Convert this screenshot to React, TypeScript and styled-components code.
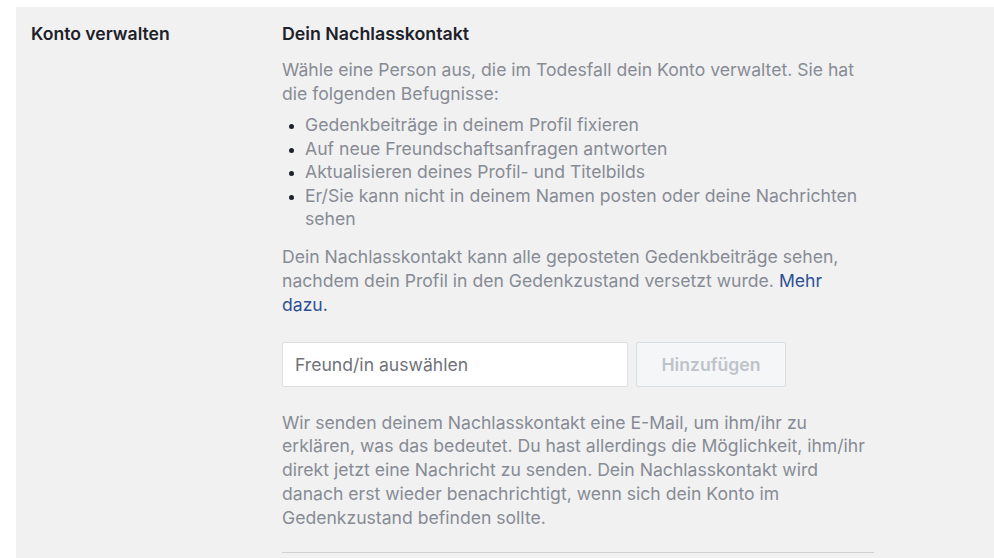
import styled, { createGlobalStyle } from "styled-components";

const GlobalStyle = createGlobalStyle`
  html, body {
    margin: 0;
    background: #ffffff;
    font-family: Inter, "Noto Sans", "Liberation Sans", sans-serif;
    -webkit-font-smoothing: antialiased;
  }
  body {
    overflow: hidden;
  }
`;

const Page = styled.div`
  padding: 7px 0 0 16px;
  height: 558px;
  box-sizing: border-box;
`;

const Panel = styled.section`
  display: grid;
  grid-template-columns: 251px 592px;
  padding: 15px 0 0 15px;
  background: #f1f1f2;
  height: 100%;
  box-sizing: border-box;
`;

const SideLabel = styled.div`
  font-size: 17.6px;
  line-height: 24px;
  font-weight: 600;
  color: #1d2129;
`;

const Content = styled.div`
  display: flex;
  flex-direction: column;
`;

const Heading = styled.h3`
  margin: 0 0 12px;
  font-size: 17.8px;
  line-height: 24px;
  font-weight: 600;
  color: #1d2129;
`;

const Text = styled.p<{ $gap?: number; $lh?: number; $max?: number }>`
  margin: ${(p) => p.$gap ?? 0}px 0 0;
  max-width: ${(p) => (p.$max ? `${p.$max}px` : "none")};
  font-size: 17.6px;
  line-height: ${(p) => p.$lh ?? 24}px;
  color: #878b94;
`;

const Link = styled.a`
  color: #2d5092;
  text-decoration: none;
  cursor: pointer;
`;

const List = styled.ul`
  margin: 7px 0 0;
  padding-left: 23px;
  font-size: 17.6px;
  line-height: 23.5px;
  color: #878b94;
  list-style: disc;

  li::marker {
    color: #1d2129;
    font-size: 14px;
  }
`;

const AddRow = styled.div`
  display: flex;
  gap: 8px;
  margin-top: 25px;
`;

const FriendInput = styled.input`
  width: 346px;
  height: 45px;
  box-sizing: border-box;
  padding: 0 12px;
  border: 1px solid #dddfe2;
  border-radius: 2px;
  background: #ffffff;
  font: inherit;
  font-size: 17.6px;
  color: #1d2129;
  outline: none;

  &::placeholder {
    color: #6f737a;
  }
`;

const AddButton = styled.button`
  width: 150px;
  height: 45px;
  box-sizing: border-box;
  border: 1px solid #dadde1;
  border-radius: 2px;
  background: #f5f6f7;
  font: inherit;
  font-size: 17.6px;
  font-weight: 600;
  color: #bec3c9;
  cursor: default;
`;

const Divider = styled.hr`
  margin: 23px 0 0;
  border: none;
  border-top: 1px solid #cfd1d5;
`;

const rights = [
  "Gedenkbeiträge in deinem Profil fixieren",
  "Auf neue Freundschaftsanfragen antworten",
  "Aktualisieren deines Profil- und Titelbilds",
  "Er/Sie kann nicht in deinem Namen posten oder deine Nachrichten sehen",
];

export default function App() {
  return (
    <>
      <GlobalStyle />
      <Page>
        <Panel>
          <SideLabel>Konto verwalten</SideLabel>
          <Content>
            <Heading>Dein Nachlasskontakt</Heading>
            <Text>
              Wähle eine Person aus, die im Todesfall dein Konto verwaltet. Sie hat die
              folgenden Befugnisse:
            </Text>
            <List>
              {rights.map((r) => (
                <li key={r}>{r}</li>
              ))}
            </List>
            <Text $gap={14} $max={580}>
              Dein Nachlasskontakt kann alle geposteten Gedenkbeiträge sehen, nachdem dein
              Profil in den Gedenkzustand versetzt wurde. <Link>Mehr dazu.</Link>
            </Text>
            <AddRow>
              <FriendInput placeholder="Freund/in auswählen" />
              <AddButton disabled>Hinzufügen</AddButton>
            </AddRow>
            <Text $gap={24} $lh={23.75}>
              Wir senden deinem Nachlasskontakt eine E-Mail, um ihm/ihr zu erklären, was das
              bedeutet. Du hast allerdings die Möglichkeit, ihm/ihr direkt jetzt eine
              Nachricht zu senden. Dein Nachlasskontakt wird danach erst wieder
              benachrichtigt, wenn sich dein Konto im Gedenkzustand befinden sollte.
            </Text>
            <Divider />
          </Content>
        </Panel>
      </Page>
    </>
  );
}
